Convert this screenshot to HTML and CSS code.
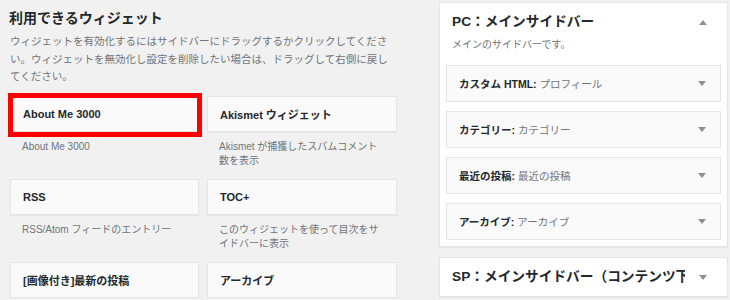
FILE: index.html
```html
<!DOCTYPE html>
<html lang="ja">
<head>
    <meta charset="UTF-8">
    <meta name="viewport" content="width=device-width, initial-scale=1.0">
    <title>ウィジェット</title>
    <link rel="stylesheet" href="styles.css">
</head>
<body>

<div class="page">
    <div class="available">
        <h2 class="available-title">利用できるウィジェット</h2>
        <p class="available-desc">ウィジェットを有効化するにはサイドバーにドラッグするかクリックしてください。ウィジェットを無効化し設定を削除したい場合は、ドラッグして右側に戻してください。</p>

        <div class="widget-list">
            <div class="widget">
                <div class="widget-top is-marked"><h3>About Me 3000</h3></div>
                <div class="widget-desc">About Me 3000</div>
            </div>
            <div class="widget">
                <div class="widget-top"><h3>Akismet ウィジェット</h3></div>
                <div class="widget-desc">Akismet が捕獲したスパムコメント数を表示</div>
            </div>
            <div class="widget">
                <div class="widget-top"><h3>RSS</h3></div>
                <div class="widget-desc">RSS/Atom フィードのエントリー</div>
            </div>
            <div class="widget">
                <div class="widget-top"><h3>TOC+</h3></div>
                <div class="widget-desc">このウィジェットを使って目次をサイドバーに表示</div>
            </div>
            <div class="widget">
                <div class="widget-top"><h3>[画像付き]最新の投稿</h3></div>
            </div>
            <div class="widget">
                <div class="widget-top"><h3>アーカイブ</h3></div>
            </div>
        </div>
    </div>

    <div class="sidebars">
        <div class="sidebar">
            <div class="sidebar-head">
                <h2>PC：メインサイドバー</h2>
                <span class="toggle"><span class="arrow up"></span></span>
            </div>
            <p class="sidebar-desc">メインのサイドバーです。</p>

            <div class="sidebar-widget">
                <h3>カスタム HTML:<span class="in-title"> プロフィール</span></h3>
                <span class="toggle"><span class="arrow"></span></span>
            </div>
            <div class="sidebar-widget">
                <h3>カテゴリー:<span class="in-title"> カテゴリー</span></h3>
                <span class="toggle"><span class="arrow"></span></span>
            </div>
            <div class="sidebar-widget">
                <h3>最近の投稿:<span class="in-title"> 最近の投稿</span></h3>
                <span class="toggle"><span class="arrow"></span></span>
            </div>
            <div class="sidebar-widget">
                <h3>アーカイブ:<span class="in-title"> アーカイブ</span></h3>
                <span class="toggle"><span class="arrow"></span></span>
            </div>
        </div>

        <div class="sidebar closed">
            <div class="sidebar-head">
                <h2>SP：メインサイドバー（コンテンツ下）</h2>
                <span class="toggle"><span class="arrow"></span></span>
            </div>
        </div>
    </div>
</div>

</body>
</html>
```

FILE: styles.css
```css
body {
    margin: 0;
    background: #f1f1f1;
    color: #23282d;
    font-family: "Liberation Sans", "Noto Sans CJK JP", sans-serif;
    overflow: hidden;
}

.page {
    display: flex;
    align-items: flex-start;
}

/* 左: 利用できるウィジェット */
.available {
    width: 387px;
    padding: 8px 0 0 10px;
}

.available-title {
    margin: 0 0 0 -1px;
    font-size: 14px;
    line-height: 20px;
    font-weight: bold;
}

.available-desc {
    width: 382px;
    margin: 5px 0 10px;
    font-size: 10.5px;
    line-height: 17.5px;
    color: #6f7479;
}

.widget-list {
    display: grid;
    grid-template-columns: 189px 190px;
    column-gap: 8px;
}

.widget-top {
    position: relative;
    height: 36px;
    box-sizing: border-box;
    display: flex;
    align-items: center;
    padding: 0 12px;
    background: #fafafa;
    border: 1px solid #e5e5e5;
    box-shadow: 0 1px 1px rgba(0, 0, 0, 0.04);
}

.widget-top h3 {
    margin: 0;
    font-size: 11px;
    font-weight: bold;
    white-space: nowrap;
}

/* 赤い囲み */
.widget-top.is-marked::after {
    content: '';
    position: absolute;
    top: -4px;
    left: -3px;
    right: -4px;
    bottom: -6px;
    border: 5px solid #f00;
}

.widget-desc {
    height: 47px;
    box-sizing: border-box;
    padding: 8px 12px 0;
    font-size: 10px;
    line-height: 14px;
    color: #6f7479;
}

/* 右: サイドバー */
.sidebars {
    width: 289px;
    margin-left: 42px;
}

.sidebar {
    margin-top: 2px;
    padding: 0 6px 6px;
    background: #fff;
    border: 1px solid #e5e5e5;
    box-shadow: 0 1px 1px rgba(0, 0, 0, 0.04);
}

.sidebar.closed {
    margin-top: 10px;
    padding-bottom: 0;
}

.sidebar-head {
    display: flex;
    align-items: center;
    padding: 9px 0 0 6px;
}

.sidebar.closed .sidebar-head {
    padding: 9px 0 9px 6px;
}

.sidebar-head h2 {
    flex: 1;
    margin: 0;
    font-size: 13.7px;
    line-height: 20px;
    font-weight: bold;
    white-space: nowrap;
    overflow: hidden;
}

.sidebar-desc {
    margin: 6px 0 13px 6px;
    font-size: 10px;
    line-height: 14px;
    color: #6f7479;
}

.sidebar-widget {
    height: 37px;
    box-sizing: border-box;
    display: flex;
    align-items: center;
    padding-left: 12px;
    margin-bottom: 9px;
    background: #fafafa;
    border: 1px solid #e5e5e5;
}

.sidebar-widget:last-child {
    margin-bottom: 0;
}

.sidebar-widget h3 {
    flex: 1;
    margin: 0;
    font-size: 10.5px;
    font-weight: bold;
    white-space: nowrap;
}

.in-title {
    font-weight: normal;
    color: #6f7479;
}

.toggle {
    width: 36px;
    display: flex;
    justify-content: center;
}

.arrow {
    width: 0;
    height: 0;
    border-left: 4px solid transparent;
    border-right: 4px solid transparent;
    border-top: 5px solid #8c8f94;
}

.arrow.up {
    border-top: none;
    border-bottom: 5px solid #8c8f94;
}
```
